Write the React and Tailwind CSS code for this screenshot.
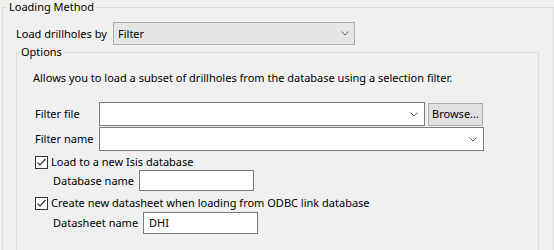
import React from "react";

function Chevron() {
  return (
    <svg width="8" height="5" viewBox="0 0 8 5" className="shrink-0">
      <path d="M0.5 0.5 L4 4 L7.5 0.5" fill="none" stroke="#606060" strokeWidth="1" />
    </svg>
  );
}

function Combo({ value, className }) {
  return (
    <div className={`flex items-center border border-[#7a7a7a] bg-white pl-[5px] pr-[6px] ${className}`}>
      <span className="flex-1">{value}</span>
      <Chevron />
    </div>
  );
}

function CheckBox({ label }) {
  return (
    <label className="flex items-center gap-[3px] whitespace-nowrap">
      <span className="flex h-[13px] w-[13px] items-center justify-center border border-[#333333] bg-white">
        <svg width="11" height="11" viewBox="0 0 11 11">
          <path d="M1.5 5.5 L4 8 L9.5 2" fill="none" stroke="#333333" strokeWidth="1.2" />
        </svg>
      </span>
      <span>{label}</span>
    </label>
  );
}

export default function App() {
  return (
    <div
      className="h-[250px] w-[554px] overflow-hidden whitespace-nowrap bg-[#f0f0f0] text-[11px] leading-[16px] text-black"
      style={{ fontFamily: '"Noto Sans", sans-serif' }}
    >
      <fieldset className="ml-[2px] h-[300px] w-[552px] border border-[#dcdcdc]">
        <legend className="ml-[4px] px-[2px] leading-[14px]">Loading Method</legend>

        <div className="pl-[13px]">
          <div className="mt-[8px] flex items-center">
            <span className="w-[97px]">Load drillholes by</span>
            <div className="flex h-[23px] w-[242px] items-center border border-[#adadad] bg-[#e5e5e5] pl-[4px] pr-[5px]">
              <span className="flex-1">Filter</span>
              <Chevron />
            </div>
          </div>

          <fieldset className="h-[260px] w-[523px] border border-[#dcdcdc]">
            <legend className="ml-[2px] px-[2px] leading-[14px]">Options</legend>

            <div className="pl-[16px]">
              <p className="mt-[11px]">
                Allows you to load a subset of drillholes from the database using a selection filter.
              </p>

              <div className="mt-[16px] ml-[2px] flex flex-col gap-[1px]">
                <div className="flex items-center">
                  <span className="w-[64px]">Filter file</span>
                  <Combo className="h-[24px] w-[326px]" />
                  <button className="ml-[3px] h-[23px] w-[55px] border border-[#adadad] bg-[#e1e1e1] text-center">
                    Browse...
                  </button>
                </div>
                <div className="flex items-center">
                  <span className="w-[64px]">Filter name</span>
                  <Combo className="h-[24px] w-[385px]" />
                </div>
              </div>

              <div className="mt-[3px] ml-[2px]">
                <CheckBox label="Load to a new Isis database" />
              </div>
              <div className="ml-[20px] flex items-center">
                <span className="w-[86px]">Database name</span>
                <div className="h-[21px] w-[115px] border border-[#7a7a7a] bg-white" />
              </div>

              <div className="mt-[4px] ml-[2px]">
                <CheckBox label="Create new datasheet when loading from ODBC link database" />
              </div>
              <div className="mt-[1px] ml-[20px] flex items-center">
                <span className="w-[90px]">Datasheet name</span>
                <div className="flex h-[22px] w-[115px] items-center border border-[#7a7a7a] bg-white pl-[5px]">
                  DHI
                </div>
              </div>
            </div>
          </fieldset>
        </div>
      </fieldset>
    </div>
  );
}
